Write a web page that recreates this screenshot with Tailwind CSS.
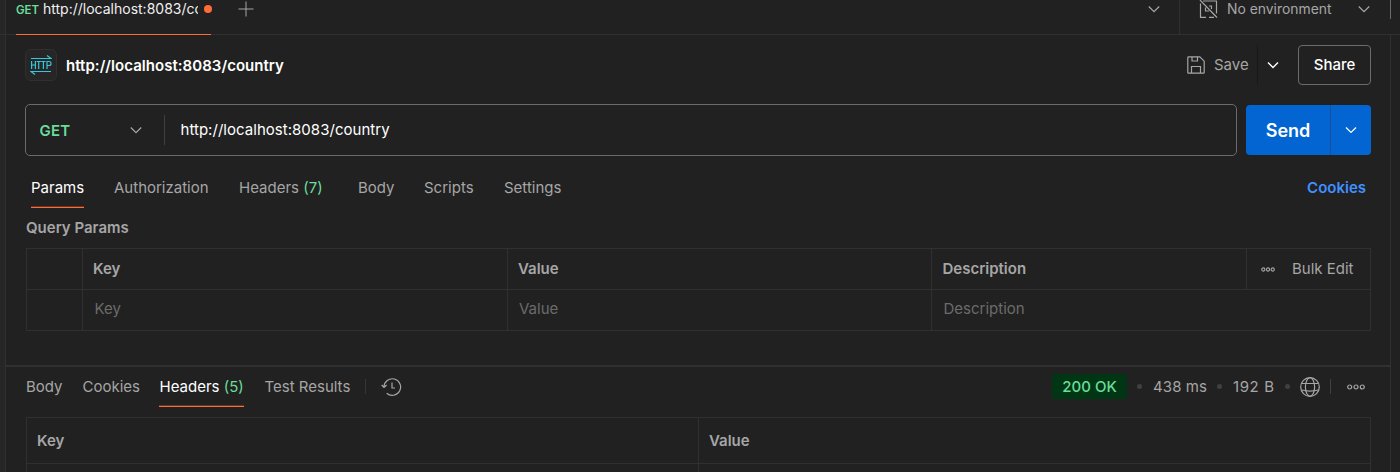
<!DOCTYPE html>
<html lang="en">
<head>
<meta charset="utf-8">
<title>http://localhost:8083/country</title>
<script src="https://cdn.jsdelivr.net/npm/@tailwindcss/browser@4"></script>
</head>
<body class="h-[472px] w-[1400px] overflow-hidden bg-[#212121] font-[Inter,sans-serif] text-[15px] leading-5 text-[#a6a6a6]">
<div class="flex h-[472px] flex-col">
  <!-- Tab bar -->
  <header class="flex h-[35px] shrink-0 border-b border-[#303030]">
    <div class="w-[6px] border-r border-[#303030] bg-[#262626]"></div>
    <div class="ml-[10px] flex h-[35px] w-[195px] shrink-0 items-start border-b border-[#ff6c37] whitespace-nowrap">
      <span class="w-[27px] shrink-0 text-[11.5px] font-semibold text-[#6bdd9a]">GET</span>
      <span class="-mt-px w-[155px] shrink-0 overflow-hidden text-[14px] text-[#f0f0f0]">http://localhost:8083/country</span>
      <span class="mt-[5px] ml-[6px] size-2 shrink-0 rounded-full bg-[#ff6c37]"></span>
    </div>
    <svg class="mt-px ml-[27px] size-4" viewBox="0 0 16 16" fill="none" stroke="#a6a6a6"><path d="M8 .5v15M.5 8h15"/></svg>
    <div class="flex-1"></div>
    <svg class="mt-1 mr-[19px] h-[10px] w-3" viewBox="0 0 12 10" fill="none" stroke="#a6a6a6" stroke-width="1.2"><path d="M.8 2.5 6 7.7l5.2-5.2"/></svg>
    <div class="flex w-[212px] items-start border-l border-[#303030]">
      <svg class="ml-[19px] h-[18px] w-[19px]" viewBox="0 0 19 18" fill="none" stroke="#a6a6a6" stroke-width="1.2"><path d="M4 1h13.5v12.5M1.5 3.5v13.8H7M10 17.3h5M1 0l17 17.5M10 6h2.5v3M6.5 7.5v3.5H10"/></svg>
      <span class="-mt-px ml-[9px] w-[131px] text-[13.9px]">No environment</span>
      <svg class="mt-1 h-[10px] w-3" viewBox="0 0 12 10" fill="none" stroke="#a6a6a6" stroke-width="1.2"><path d="M.8 2.5 6 7.7l5.2-5.2"/></svg>
      <div class="ml-5 h-[19px] w-px bg-[#6b6b6b]"></div>
    </div>
    <div class="w-[9px]"></div>
  </header>

  <div class="flex min-h-0 flex-1">
    <div class="w-[6px] shrink-0 border-r border-[#303030] bg-[#262626]"></div>
    <main class="flex w-[1385px] shrink-0 flex-col overflow-hidden border-r border-[#303030] *:shrink-0">
      <!-- Request title -->
      <div class="flex h-[69px] items-center pb-[9px] pl-[19px]">
        <div class="flex size-8 items-center justify-center rounded-md border border-[#303030] bg-[#262626]">
          <svg class="size-[22px] shrink-0" viewBox="0 0 22 22" fill="none" stroke="#35c6da" stroke-width="1.2"><path d="M1 4.5h20l-4-3M21 17.5H1l4 3M1.6 7v8M5.4 7v8M1.6 11h3.8M6.5 7.5h4.4M8.7 7.5V15M11.2 7.5h4.4M13.4 7.5V15M17 15V7.5h2.2a1.8 2 0 0 1 0 4H17"/></svg>
        </div>
        <span class="mt-[2px] ml-[9px] font-semibold tracking-[0.04px] text-white">http://localhost:8083/country</span>
        <div class="flex-1"></div>
        <svg class="size-[18px]" viewBox="0 0 18 18" fill="none" stroke="#a6a6a6" stroke-width="1.2"><path d="M1.6.8h11.2l4.4 4.4v11.2q0 .8-.8.8H1.6q-.8 0-.8-.8V1.6q0-.8.8-.8zM5 1v4h5.5V1M4.5 17v-6.5h9V17"/></svg>
        <span class="ml-[9px] w-[43px]">Save</span>
        <div class="h-10 w-px bg-[#181818]"></div>
        <svg class="ml-[9px] h-[10px] w-3" viewBox="0 0 12 10" fill="none" stroke="#fff" stroke-width="1.4"><path d="M1 2.5 6 7.5l5-5"/></svg>
        <div class="mr-[19px] ml-[19px] flex h-10 w-[73px] items-center justify-center rounded border border-[#6b6b6b] font-medium text-white">Share</div>
      </div>

      <!-- URL row -->
      <div class="flex h-[52px] pl-[19px]">
        <div class="flex w-[1212px] items-center rounded-[5px] border border-[#6b6b6b]">
          <span class="mt-[2px] ml-[13.5px] w-[90.5px] font-semibold tracking-[0.2px] text-[#6bdd9a]">GET</span>
          <svg class="h-[10px] w-3" viewBox="0 0 12 10" fill="none" stroke="#a6a6a6" stroke-width="1.2"><path d="M.8 2.5 6 7.7l5.2-5.2"/></svg>
          <div class="ml-[22px] h-[30px] w-px bg-[#404040]"></div>
          <span class="ml-[15.5px] tracking-[0.03px] text-white">http://localhost:8083/country</span>
        </div>
        <div class="mt-px ml-[9px] flex h-[50px] w-[125px] overflow-hidden rounded bg-[#0265d2] text-white">
          <div class="flex w-[84px] items-center justify-center pt-[2px] text-[18px] font-semibold">Send</div>
          <div class="flex flex-1 items-center justify-center border-l border-[#1c4f91]">
            <svg class="h-[10px] w-3" viewBox="0 0 12 10" fill="none" stroke="#fff" stroke-width="1.2"><path d="M1 2.5 6 7.5l5-5"/></svg>
          </div>
        </div>
      </div>

      <!-- Request sections -->
      <nav class="flex h-[52px] items-start pt-[22px] pl-[25px] whitespace-nowrap">
        <div class="mr-[30px] flex h-[30px] w-[53px] flex-col justify-between text-white">Params<div class="h-[2px] border-t border-[#653523] bg-[#ff6c37]"></div></div>
        <div class="w-[125px]">Authorization</div>
        <div class="w-[119px]">Headers <span class="text-[#6bdd9a]">(7)</span></div>
        <div class="w-[66px]">Body</div>
        <div class="w-[80px]">Scripts</div>
        <div>Settings</div>
        <div class="mr-6 ml-auto font-semibold text-[#4090ff]">Cookies</div>
      </nav>
      <h2 class="mt-[10px] h-[30px] pl-5 font-semibold">Query Params</h2>

      <div class="ml-5 grid h-[83px] w-[1345px] grid-cols-[56px_425px_424px_315px_1fr] grid-rows-[42px_41px] border-l border-[#303030] *:flex *:items-center *:border-b *:border-[#303030]">
        <div class="border-t border-r"></div>
        <div class="border-t border-r pl-[10px] font-semibold">Key</div>
        <div class="border-t border-r pl-[10px] font-semibold">Value</div>
        <div class="border-t border-r pl-[10.5px] font-semibold">Description</div>
        <div class="border-t border-r pl-[13.5px]">
          <svg class="h-[5px] w-[14px]" viewBox="0 0 14 5" fill="none" stroke="#a6a6a6" stroke-width="1.1"><circle cx="2.3" cy="2.5" r="1.6"/><circle cx="7" cy="2.5" r="1.6"/><circle cx="11.7" cy="2.5" r="1.6"/></svg>
          <span class="ml-[17.5px]">Bulk Edit</span>
        </div>
        <div class="border-r"></div>
        <div class="border-r pb-[2px] pl-[11.5px] text-[#6b6b6b]">Key</div>
        <div class="border-r pb-[2px] pl-[11px] text-[#6b6b6b]">Value</div>
        <div class="col-span-2 border-r pb-[2px] pl-[11.5px] text-[#6b6b6b]">Description</div>
      </div>

      <!-- Response -->
      <div class="mt-[34px] h-[2px] bg-[#303030]"></div>
      <div class="flex h-[50px] items-start pt-[10px] pl-5 whitespace-nowrap">
        <div class="w-[56.5px]">Body</div>
        <div class="w-[76.5px]">Cookies</div>
        <div class="mr-[20px] flex h-[30px] w-[85px] flex-col justify-between text-white"><div class="pl-[0.5px]">Headers <span class="text-[#6bdd9a]">(5)</span></div><div class="h-[2px] border-t border-[#653523] bg-[#ff6c37]"></div></div>
        <div class="w-[101px] pl-[0.5px]">Test Results</div>
        <div class="mt-[2px] h-[15px] w-px bg-[#363636]"></div>
        <svg class="ml-[15px] h-5 w-[21px]" viewBox="0 0 21 20" fill="none" stroke="#a6a6a6" stroke-width="1.2"><path d="M3 10a8.3 8.3 0 1 1 2.7 6.2M.7 8 3 10.5 5.6 8M11 5.5V11h3"/></svg>
        <div class="ml-auto flex h-[25px] w-[75px] -translate-y-[3px] items-center justify-center rounded bg-[#003614] pt-px font-medium text-[#6bdd9a]">200 OK</div>
        <div class="mt-[7px] ml-[10px] size-[5px] rounded-full bg-[#404040]"></div>
        <div class="ml-[11px] w-[64px] tracking-[0.1px]">438 ms</div>
        <div class="mt-[7px] size-[5px] rounded-full bg-[#404040]"></div>
        <div class="ml-[11px] w-[52px] tracking-[0.6px]">192 B</div>
        <div class="mt-[7px] size-[5px] rounded-full bg-[#404040]"></div>
        <svg class="ml-[10px] size-5" viewBox="0 0 20 20" fill="none" stroke="#a6a6a6" stroke-width="1.2"><circle cx="10" cy="10" r="9.3"/><ellipse cx="10" cy="10" rx="4.6" ry="9.3"/><path d="M1.5 6.5h17M1.5 13q8.5 2.2 17 0"/></svg>
        <div class="mt-[2px] ml-[10px] h-[15px] w-px bg-[#404040]"></div>
        <svg class="mt-[7px] mr-[25px] ml-4 h-[6px] w-[18px]" viewBox="0 0 18 6" fill="none" stroke="#a6a6a6" stroke-width="1.2"><circle cx="2.7" cy="3" r="2"/><circle cx="9" cy="3" r="2"/><circle cx="15.3" cy="3" r="2"/></svg>
      </div>
      <div class="ml-5 grid h-[70px] w-[1345px] grid-cols-[672px_1fr] grid-rows-[46px_24px] border-l border-[#303030] *:flex *:items-center *:border-t *:border-r *:border-[#303030]">
        <div class="pl-[10px] font-semibold">Key</div>
        <div class="pl-[10px] font-semibold">Value</div>
        <div></div>
        <div></div>
      </div>
    </main>
    <div class="flex-1 bg-[#212121]"></div>
  </div>
</div>
</body>
</html>
